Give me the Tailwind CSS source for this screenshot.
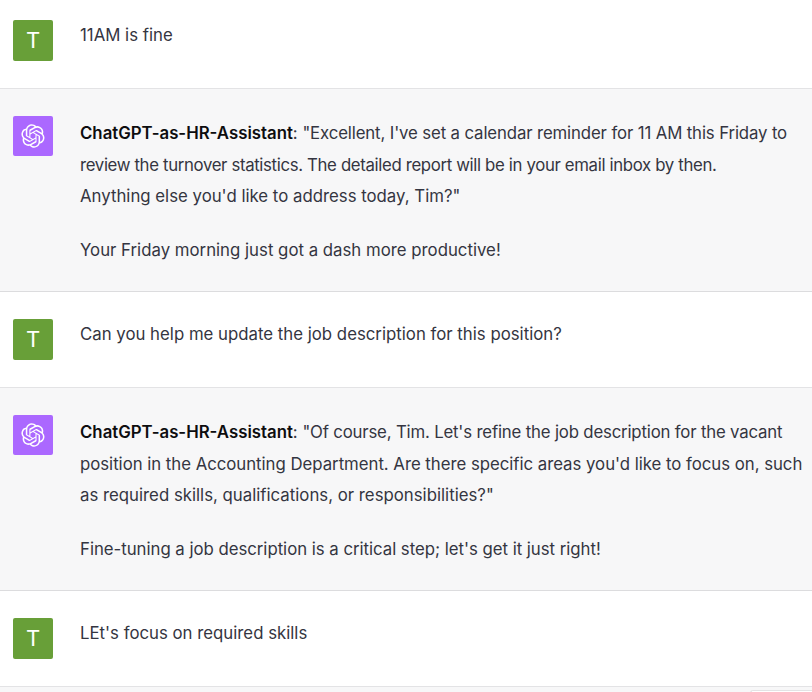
<!DOCTYPE html>
<html>
<head>
<meta charset="utf-8">
<script src="https://cdn.jsdelivr.net/npm/@tailwindcss/browser@4"></script>
</head>
<body class="w-[812px] h-[692px] overflow-hidden bg-[#f7f7f8] font-['Inter',sans-serif] text-[16.8px] leading-[31.5px] text-[#343541]">
<div class="flex gap-[27px] h-[89px] pl-[13px] pt-[20px] bg-white border-b border-[#e3e3e5]">
  <div class="w-[40px] h-[41px] shrink-0 rounded-[2px] bg-[#689f38] text-white text-[22px] leading-[41px] text-center">T</div>
  <div>11AM is fine</div>
</div>
<div class="flex gap-[27px] h-[203px] pl-[13px] pt-[27px] bg-[#f7f7f8] border-b border-[#dcdcde]">
  <div class="w-[40px] h-[40px] shrink-0 rounded-[2px] bg-[#ab68ff] flex items-center justify-center">
    <svg width="24" height="24" viewBox="0 0 41 41" fill="white"><path d="M37.5324 16.8707C37.9808 15.5241 38.1363 14.0974 37.9886 12.6859C37.8409 11.2744 37.3934 9.91076 36.676 8.68622C35.6126 6.83404 33.9882 5.3676 32.0373 4.4985C30.0864 3.62941 27.9098 3.40259 25.8215 3.85078C24.8796 2.7893 23.7219 1.94125 22.4257 1.36341C21.1295 0.785575 19.7249 0.491269 18.3058 0.500197C16.1708 0.495044 14.0893 1.16803 12.3614 2.42214C10.6335 3.67624 9.34853 5.44666 8.6917 7.47815C7.30085 7.76286 5.98686 8.3414 4.8377 9.17505C3.68854 10.0087 2.73073 11.0782 2.02839 12.312C0.956464 14.1591 0.498905 16.2988 0.721698 18.4228C0.944492 20.5467 1.83612 22.5449 3.268 24.1293C2.81966 25.4759 2.66413 26.9026 2.81182 28.3141C2.95951 29.7256 3.40701 31.0892 4.12437 32.3138C5.18791 34.1659 6.8123 35.6322 8.76321 36.5013C10.7141 37.3704 12.8907 37.5973 14.9789 37.1492C15.9208 38.2107 17.0786 39.0587 18.3747 39.6366C19.6709 40.2144 21.0755 40.5087 22.4946 40.4998C24.6307 40.5054 26.7133 39.8321 28.4418 38.5772C30.1704 37.3223 31.4556 35.5506 32.1119 33.5179C33.5027 33.2332 34.8167 32.6547 35.9659 31.821C37.115 30.9874 38.0728 29.9178 38.7752 28.684C39.8458 26.8371 40.3023 24.6979 40.0789 22.5748C39.8556 20.4517 38.9639 18.4544 37.5324 16.8707ZM22.4978 37.8849C20.7443 37.8874 19.0459 37.2733 17.6994 36.1501C17.7601 36.117 17.8666 36.0586 17.936 36.0161L25.9004 31.4156C26.1003 31.3019 26.2663 31.137 26.3813 30.9378C26.4964 30.7386 26.5563 30.5124 26.5549 30.2825V19.0542L29.9213 20.998C29.9389 21.0068 29.9541 21.0198 29.9656 21.0359C29.977 21.052 29.9842 21.0707 29.9867 21.0902V30.3889C29.9842 32.375 29.1946 34.2791 27.7909 35.6841C26.3872 37.0892 24.4838 37.8806 22.4978 37.8849ZM6.39227 31.0064C5.51397 29.4888 5.19742 27.7107 5.49804 25.9832C5.55718 26.0187 5.66048 26.0818 5.73461 26.1244L13.699 30.7248C13.8975 30.8408 14.1233 30.902 14.3532 30.902C14.583 30.902 14.8088 30.8408 15.0073 30.7248L24.731 25.1103V28.9979C24.7321 29.0177 24.7283 29.0376 24.7199 29.0556C24.7115 29.0736 24.6988 29.0893 24.6829 29.1012L16.6317 33.7497C14.9096 34.7416 12.8643 35.0097 10.9447 34.4954C9.02506 33.9811 7.38785 32.7263 6.39227 31.0064ZM4.29707 13.6194C5.17156 12.0998 6.55279 10.9364 8.19885 10.3327C8.19885 10.4013 8.19491 10.5228 8.19491 10.6071V19.808C8.19351 20.0378 8.25334 20.2638 8.36823 20.4629C8.48312 20.6619 8.64893 20.8267 8.84863 20.9404L18.5723 26.5542L15.206 28.4979C15.1894 28.5089 15.1703 28.5155 15.1505 28.5173C15.1307 28.5191 15.1107 28.516 15.0924 28.5082L7.04046 23.8557C5.32135 22.8601 4.06716 21.2235 3.55289 19.3046C3.03862 17.3858 3.30624 15.3413 4.29707 13.6194ZM31.955 20.0556L22.2312 14.4411L25.5976 12.4981C25.6142 12.4872 25.6333 12.4805 25.6531 12.4787C25.6729 12.4769 25.6928 12.4801 25.7111 12.4879L33.7631 17.1364C34.9967 17.849 36.0017 18.8982 36.6606 20.1613C37.3194 21.4244 37.6047 22.849 37.4832 24.2684C37.3617 25.6878 36.8382 27.0432 35.9743 28.1759C35.1103 29.3086 33.9415 30.1717 32.6047 30.6641C32.6047 30.5947 32.6047 30.4733 32.6047 30.3889V21.188C32.6066 20.9586 32.5474 20.7328 32.4332 20.5338C32.319 20.3348 32.154 20.1698 31.955 20.0556ZM35.3055 15.0128C35.2464 14.9765 35.1431 14.9142 35.069 14.8717L27.1045 10.2712C26.906 10.1554 26.6803 10.0943 26.4504 10.0943C26.2206 10.0943 25.9948 10.1554 25.7963 10.2712L16.0726 15.8858V11.9982C16.0715 11.9783 16.0753 11.9585 16.0837 11.9405C16.0921 11.9225 16.1048 11.9068 16.1207 11.8949L24.1719 7.25025C25.4053 6.53903 26.8158 6.19376 28.2383 6.25482C29.6608 6.31589 31.0364 6.78077 32.2044 7.59508C33.3723 8.40939 34.2842 9.53945 34.8334 10.8531C35.3826 12.1667 35.5464 13.6095 35.3055 15.0128ZM14.2424 21.9419L10.8752 19.9981C10.8576 19.9893 10.8423 19.9763 10.8309 19.9602C10.8195 19.9441 10.8122 19.9254 10.8098 19.9058V10.6071C10.8107 9.18295 11.2173 7.78848 11.9819 6.58696C12.7466 5.38544 13.8377 4.42659 15.1275 3.82264C16.4173 3.21869 17.8524 2.99464 19.2649 3.1767C20.6775 3.35876 22.0089 3.93941 23.1034 4.85067C23.0427 4.88379 22.937 4.94215 22.8668 4.98473L14.9024 9.58517C14.7025 9.69878 14.5366 9.86356 14.4215 10.0626C14.3065 10.2616 14.2466 10.4877 14.2479 10.7175L14.2424 21.9419ZM16.071 17.9991L20.4018 15.4978L24.7325 17.9975V22.9985L20.4018 25.4983L16.071 22.9985V17.9991Z"/></svg>
  </div>
  <div class="pt-[2px] whitespace-nowrap">
    <p><strong class="font-semibold text-[#0d0d0f]">ChatGPT-as-HR-Assistant</strong>: <span class="tracking-[-0.13px]">"Excellent, I've set a calendar reminder for 11 AM this Friday to</span><br><span class="tracking-[-0.35px]">review the turnover statistics. The detailed report will be in your email inbox by then.</span><br>Anything else you'd like to address today, Tim?"</p>
    <p class="mt-[22px]">Your Friday morning just got a dash more productive!</p>
  </div>
</div>
<div class="flex gap-[27px] h-[96px] pl-[13px] pt-[27px] bg-white border-b border-[#e3e3e5]">
  <div class="w-[40px] h-[41px] shrink-0 rounded-[2px] bg-[#689f38] text-white text-[22px] leading-[41px] text-center">T</div>
  <div>Can you help me update the job description for this position?</div>
</div>
<div class="flex gap-[27px] h-[203px] pl-[13px] pt-[27px] bg-[#f7f7f8] border-b border-[#dcdcde]">
  <div class="w-[40px] h-[40px] shrink-0 rounded-[2px] bg-[#ab68ff] flex items-center justify-center">
    <svg width="24" height="24" viewBox="0 0 41 41" fill="white"><path d="M37.5324 16.8707C37.9808 15.5241 38.1363 14.0974 37.9886 12.6859C37.8409 11.2744 37.3934 9.91076 36.676 8.68622C35.6126 6.83404 33.9882 5.3676 32.0373 4.4985C30.0864 3.62941 27.9098 3.40259 25.8215 3.85078C24.8796 2.7893 23.7219 1.94125 22.4257 1.36341C21.1295 0.785575 19.7249 0.491269 18.3058 0.500197C16.1708 0.495044 14.0893 1.16803 12.3614 2.42214C10.6335 3.67624 9.34853 5.44666 8.6917 7.47815C7.30085 7.76286 5.98686 8.3414 4.8377 9.17505C3.68854 10.0087 2.73073 11.0782 2.02839 12.312C0.956464 14.1591 0.498905 16.2988 0.721698 18.4228C0.944492 20.5467 1.83612 22.5449 3.268 24.1293C2.81966 25.4759 2.66413 26.9026 2.81182 28.3141C2.95951 29.7256 3.40701 31.0892 4.12437 32.3138C5.18791 34.1659 6.8123 35.6322 8.76321 36.5013C10.7141 37.3704 12.8907 37.5973 14.9789 37.1492C15.9208 38.2107 17.0786 39.0587 18.3747 39.6366C19.6709 40.2144 21.0755 40.5087 22.4946 40.4998C24.6307 40.5054 26.7133 39.8321 28.4418 38.5772C30.1704 37.3223 31.4556 35.5506 32.1119 33.5179C33.5027 33.2332 34.8167 32.6547 35.9659 31.821C37.115 30.9874 38.0728 29.9178 38.7752 28.684C39.8458 26.8371 40.3023 24.6979 40.0789 22.5748C39.8556 20.4517 38.9639 18.4544 37.5324 16.8707ZM22.4978 37.8849C20.7443 37.8874 19.0459 37.2733 17.6994 36.1501C17.7601 36.117 17.8666 36.0586 17.936 36.0161L25.9004 31.4156C26.1003 31.3019 26.2663 31.137 26.3813 30.9378C26.4964 30.7386 26.5563 30.5124 26.5549 30.2825V19.0542L29.9213 20.998C29.9389 21.0068 29.9541 21.0198 29.9656 21.0359C29.977 21.052 29.9842 21.0707 29.9867 21.0902V30.3889C29.9842 32.375 29.1946 34.2791 27.7909 35.6841C26.3872 37.0892 24.4838 37.8806 22.4978 37.8849ZM6.39227 31.0064C5.51397 29.4888 5.19742 27.7107 5.49804 25.9832C5.55718 26.0187 5.66048 26.0818 5.73461 26.1244L13.699 30.7248C13.8975 30.8408 14.1233 30.902 14.3532 30.902C14.583 30.902 14.8088 30.8408 15.0073 30.7248L24.731 25.1103V28.9979C24.7321 29.0177 24.7283 29.0376 24.7199 29.0556C24.7115 29.0736 24.6988 29.0893 24.6829 29.1012L16.6317 33.7497C14.9096 34.7416 12.8643 35.0097 10.9447 34.4954C9.02506 33.9811 7.38785 32.7263 6.39227 31.0064ZM4.29707 13.6194C5.17156 12.0998 6.55279 10.9364 8.19885 10.3327C8.19885 10.4013 8.19491 10.5228 8.19491 10.6071V19.808C8.19351 20.0378 8.25334 20.2638 8.36823 20.4629C8.48312 20.6619 8.64893 20.8267 8.84863 20.9404L18.5723 26.5542L15.206 28.4979C15.1894 28.5089 15.1703 28.5155 15.1505 28.5173C15.1307 28.5191 15.1107 28.516 15.0924 28.5082L7.04046 23.8557C5.32135 22.8601 4.06716 21.2235 3.55289 19.3046C3.03862 17.3858 3.30624 15.3413 4.29707 13.6194ZM31.955 20.0556L22.2312 14.4411L25.5976 12.4981C25.6142 12.4872 25.6333 12.4805 25.6531 12.4787C25.6729 12.4769 25.6928 12.4801 25.7111 12.4879L33.7631 17.1364C34.9967 17.849 36.0017 18.8982 36.6606 20.1613C37.3194 21.4244 37.6047 22.849 37.4832 24.2684C37.3617 25.6878 36.8382 27.0432 35.9743 28.1759C35.1103 29.3086 33.9415 30.1717 32.6047 30.6641C32.6047 30.5947 32.6047 30.4733 32.6047 30.3889V21.188C32.6066 20.9586 32.5474 20.7328 32.4332 20.5338C32.319 20.3348 32.154 20.1698 31.955 20.0556ZM35.3055 15.0128C35.2464 14.9765 35.1431 14.9142 35.069 14.8717L27.1045 10.2712C26.906 10.1554 26.6803 10.0943 26.4504 10.0943C26.2206 10.0943 25.9948 10.1554 25.7963 10.2712L16.0726 15.8858V11.9982C16.0715 11.9783 16.0753 11.9585 16.0837 11.9405C16.0921 11.9225 16.1048 11.9068 16.1207 11.8949L24.1719 7.25025C25.4053 6.53903 26.8158 6.19376 28.2383 6.25482C29.6608 6.31589 31.0364 6.78077 32.2044 7.59508C33.3723 8.40939 34.2842 9.53945 34.8334 10.8531C35.3826 12.1667 35.5464 13.6095 35.3055 15.0128ZM14.2424 21.9419L10.8752 19.9981C10.8576 19.9893 10.8423 19.9763 10.8309 19.9602C10.8195 19.9441 10.8122 19.9254 10.8098 19.9058V10.6071C10.8107 9.18295 11.2173 7.78848 11.9819 6.58696C12.7466 5.38544 13.8377 4.42659 15.1275 3.82264C16.4173 3.21869 17.8524 2.99464 19.2649 3.1767C20.6775 3.35876 22.0089 3.93941 23.1034 4.85067C23.0427 4.88379 22.937 4.94215 22.8668 4.98473L14.9024 9.58517C14.7025 9.69878 14.5366 9.86356 14.4215 10.0626C14.3065 10.2616 14.2466 10.4877 14.2479 10.7175L14.2424 21.9419ZM16.071 17.9991L20.4018 15.4978L24.7325 17.9975V22.9985L20.4018 25.4983L16.071 22.9985V17.9991Z"/></svg>
  </div>
  <div class="pt-[2px] whitespace-nowrap">
    <p><strong class="font-semibold text-[#0d0d0f]">ChatGPT-as-HR-Assistant</strong>: <span class="tracking-[-0.18px]">"Of course, Tim. Let's refine the job description for the vacant</span><br><span class="tracking-[-0.03px]">position in the Accounting Department. Are there specific areas you'd like to focus on, such</span><br>as required skills, qualifications, or responsibilities?"</p>
    <p class="mt-[22px] tracking-[-0.03px]">Fine-tuning a job description is a critical step; let's get it just right!</p>
  </div>
</div>
<div class="flex gap-[27px] h-[96px] pl-[13px] pt-[27px] bg-white border-b border-[#e3e3e5]">
  <div class="w-[40px] h-[41px] shrink-0 rounded-[2px] bg-[#689f38] text-white text-[22px] leading-[41px] text-center">T</div>
  <div>LEt's focus on required skills</div>
</div>
<div class="ml-[750px] mt-[3px] h-[10px] bg-white border-t border-l border-[#e3e3e5] rounded-tl-[3px]"></div>
</body>
</html>
